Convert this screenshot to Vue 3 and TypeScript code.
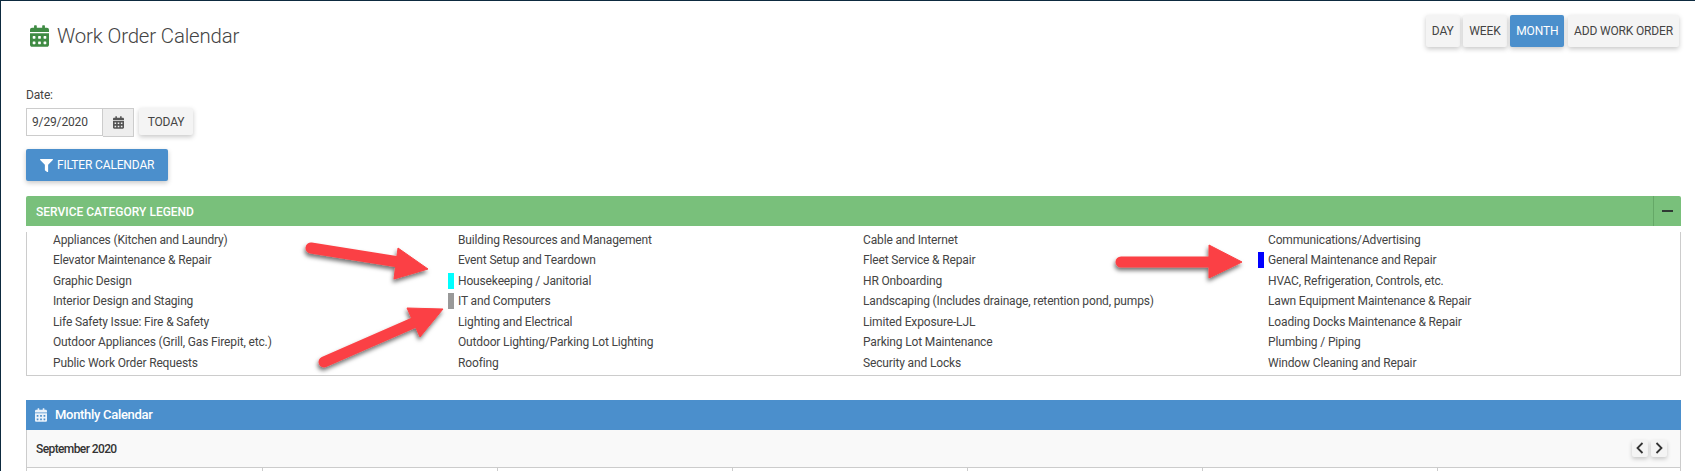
<script setup lang="ts">
interface Category { name: string; color?: string }

const calendarPath =
  'M0 464c0 26.5 21.5 48 48 48h352c26.5 0 48-21.5 48-48V192H0v272zm320-196c0-6.6 5.4-12 12-12h40c6.6 0 12 5.4 12 12v40c0 6.6-5.4 12-12 12h-40c-6.6 0-12-5.4-12-12v-40zm0 128c0-6.6 5.4-12 12-12h40c6.6 0 12 5.4 12 12v40c0 6.6-5.4 12-12 12h-40c-6.6 0-12-5.4-12-12v-40zM192 268c0-6.6 5.4-12 12-12h40c6.6 0 12 5.4 12 12v40c0 6.6-5.4 12-12 12h-40c-6.6 0-12-5.4-12-12v-40zm0 128c0-6.6 5.4-12 12-12h40c6.6 0 12 5.4 12 12v40c0 6.6-5.4 12-12 12h-40c-6.6 0-12-5.4-12-12v-40zM64 268c0-6.6 5.4-12 12-12h40c6.6 0 12 5.4 12 12v40c0 6.6-5.4 12-12 12H76c-6.6 0-12-5.4-12-12v-40zm0 128c0-6.6 5.4-12 12-12h40c6.6 0 12 5.4 12 12v40c0 6.6-5.4 12-12 12H76c-6.6 0-12-5.4-12-12v-40zM400 64h-48V16c0-8.8-7.2-16-16-16h-32c-8.8 0-16 7.2-16 16v48H160V16c0-8.8-7.2-16-16-16h-32c-8.8 0-16 7.2-16 16v48H48C21.5 64 0 85.5 0 112v48h448v-48c0-26.5-21.5-48-48-48z'

const categories: Category[] = [
  { name: 'Appliances (Kitchen and Laundry)' },
  { name: 'Building Resources and Management' },
  { name: 'Cable and Internet' },
  { name: 'Communications/Advertising' },
  { name: 'Elevator Maintenance & Repair' },
  { name: 'Event Setup and Teardown' },
  { name: 'Fleet Service & Repair' },
  { name: 'General Maintenance and Repair', color: '#0000ff' },
  { name: 'Graphic Design' },
  { name: 'Housekeeping / Janitorial', color: '#00ffff' },
  { name: 'HR Onboarding' },
  { name: 'HVAC, Refrigeration, Controls, etc.' },
  { name: 'Interior Design and Staging' },
  { name: 'IT and Computers', color: '#999999' },
  { name: 'Landscaping (Includes drainage, retention pond, pumps)' },
  { name: 'Lawn Equipment Maintenance & Repair' },
  { name: 'Life Safety Issue: Fire & Safety' },
  { name: 'Lighting and Electrical' },
  { name: 'Limited Exposure-LJL' },
  { name: 'Loading Docks Maintenance & Repair' },
  { name: 'Outdoor Appliances (Grill, Gas Firepit, etc.)' },
  { name: 'Outdoor Lighting/Parking Lot Lighting' },
  { name: 'Parking Lot Maintenance' },
  { name: 'Plumbing / Piping' },
  { name: 'Public Work Order Requests' },
  { name: 'Roofing' },
  { name: 'Security and Locks' },
  { name: 'Window Cleaning and Repair' },
]

const views = ['Day', 'Week', 'Month', 'Add Work Order']
const weekdays = 7
</script>

<template>
  <div class="page">
    <header class="top">
      <h1 class="title">
        <svg class="title-icon" viewBox="0 0 448 512"><path :d="calendarPath" /></svg>
        <span>Work Order Calendar</span>
      </h1>
      <div class="views">
        <button v-for="v in views" :key="v" class="btn" :class="{ active: v === 'Month' }">{{ v }}</button>
      </div>
    </header>

    <label class="date-label">Date:</label>
    <div class="date-row">
      <div class="date-input">9/29/2020</div>
      <div class="date-addon">
        <svg viewBox="0 0 448 512"><path :d="calendarPath" /></svg>
      </div>
      <button class="btn today">Today</button>
    </div>

    <button class="btn primary filter">
      <svg viewBox="0 0 512 512"><path d="M487.976 0H24.028C2.71 0-8.047 25.866 7.058 40.971L192 225.941V432c0 7.831 3.821 15.17 10.237 19.662l80 55.98C298.02 518.69 320 507.493 320 487.98V225.941l184.947-184.97C520.021 25.896 509.338 0 487.976 0z" /></svg>
      Filter Calendar
    </button>

    <section class="legend-head">
      <span>SERVICE CATEGORY LEGEND</span>
      <div class="collapse"><i></i></div>
    </section>
    <ul class="legend">
      <li v-for="c in categories" :key="c.name">
        <i class="swatch" :style="{ background: c.color ?? 'transparent' }"></i>
        <span>{{ c.name }}</span>
      </li>
    </ul>

    <section class="cal-head">
      <svg viewBox="0 0 448 512"><path :d="calendarPath" /></svg>
      <span>Monthly Calendar</span>
    </section>
    <div class="cal-toolbar">
      <strong>September 2020</strong>
      <div class="nav">
        <button class="nav-btn">
          <svg viewBox="0 0 10 14"><path d="M7.5 2 2.5 7l5 5" /></svg>
        </button>
        <button class="nav-btn">
          <svg viewBox="0 0 10 14"><path d="M2.5 2l5 5-5 5" /></svg>
        </button>
      </div>
    </div>
    <div class="cal-grid">
      <div v-for="n in weekdays" :key="n" class="cal-cell"></div>
    </div>

    <svg class="arrows" viewBox="0 0 1695 471" width="1695" height="471">
      <defs>
        <filter id="arrow-shadow" x="-20%" y="-40%" width="140%" height="180%">
          <feDropShadow dx="-1" dy="3" stdDeviation="2" flood-color="#000" flood-opacity="0.55" />
        </filter>
      </defs>
      <g class="arrow" filter="url(#arrow-shadow)">
        <path class="shaft" d="M311 248 405 263" />
        <polygon points="398,248 428,269 394,279" />
      </g>
      <g class="arrow" filter="url(#arrow-shadow)">
        <path class="shaft" d="M324 362 420 320" />
        <polygon points="407,308 443,309 420,337" />
      </g>
      <g class="arrow" filter="url(#arrow-shadow)">
        <path class="shaft" d="M1121 262 1215 262" />
        <polygon points="1209,245 1242,262 1209,278" />
      </g>
    </svg>
  </div>
</template>

<style scoped>
.page {
  position: relative;
  box-sizing: border-box;
  width: 1695px;
  height: 471px;
  overflow: hidden;
  padding: 14px 14px 0 25px;
  background: #fff;
  border-top: 1px solid #0d2a3f;
  border-left: 1px solid #0d2a3f;
  font-family: Roboto, "Liberation Sans", sans-serif;
  font-size: 12px;
  letter-spacing: -0.15px;
  color: #444;
}
.top {
  display: flex;
  justify-content: space-between;
  height: 32px;
  margin-bottom: 41px;
}
.title {
  display: flex;
  align-items: center;
  gap: 8px;
  margin: 0 0 0 4px;
  font-size: 20.4px;
  font-weight: 300;
  color: #444;
  height: 41px;
}
.title span {
  padding-top: 1px;
}
.title-icon {
  width: 19px;
  height: 22px;
  fill: #3f8b43;
}
.views {
  display: flex;
  gap: 3.7px;
  margin-right: 2px;
}
.btn {
  border: 0;
  border-radius: 2px;
  background: #f4f4f4;
  color: #444;
  font: 400 12px Roboto, "Liberation Sans", sans-serif;
  letter-spacing: -0.15px;
  text-transform: uppercase;
  padding: 0 6px;
  height: 32px;
  box-shadow: 0 2px 5px rgba(0, 0, 0, 0.22);
}
.btn.active,
.btn.primary {
  background: #4b8fcc;
  color: #fff;
}
.date-label {
  display: block;
  height: 14px;
  line-height: 14px;
  margin-bottom: 6px;
}
.date-row {
  display: flex;
  align-items: flex-start;
  height: 28px;
}
.date-input {
  box-sizing: border-box;
  width: 77px;
  height: 28px;
  line-height: 26px;
  padding-left: 5px;
  border: 1px solid #ccc;
  font-size: 12px;
}
.date-addon {
  box-sizing: border-box;
  width: 31px;
  height: 29px;
  border: 1px solid #ccc;
  border-left: 0;
  background: #eee;
  display: flex;
  align-items: center;
  justify-content: center;
}
.date-addon svg {
  width: 11px;
  height: 13px;
  fill: #555;
}
.today {
  margin-left: 5px;
  height: 27px;
  width: 54px;
  padding: 0;
}
.filter {
  display: flex;
  align-items: center;
  gap: 4px;
  width: 142px;
  margin-top: 13px;
  padding: 0 0 0 14px;
  border-radius: 2px;
}
.filter svg {
  width: 13px;
  height: 13px;
  fill: #fff;
}
.legend-head {
  display: flex;
  align-items: center;
  justify-content: space-between;
  box-sizing: border-box;
  height: 30px;
  margin-top: 15px;
  padding: 0 0 0 10px;
  background: #79c07b;
  color: #fff;
  font-weight: 500;
  letter-spacing: 0;
  border-radius: 2px 2px 0 0;
}
.legend-head span {
  padding-top: 1px;
}
.collapse {
  width: 27px;
  height: 100%;
  border-left: 1px solid #65a867;
  display: flex;
  align-items: center;
  justify-content: center;
}
.collapse i {
  width: 11px;
  height: 2px;
  background: #2f3a33;
}
.legend {
  display: grid;
  grid-template-columns: repeat(4, 405px);
  grid-auto-rows: 16px;
  row-gap: 4.5px;
  margin: 5.9px 0 0;
  padding: 0 0 4.1px 16px;
  border: 1px solid #ccc;
  border-top: 0;
  list-style: none;
}
.legend li {
  display: flex;
  align-items: center;
  gap: 4px;
  line-height: 16px;
  white-space: nowrap;
}
.swatch {
  flex: none;
  width: 6px;
  height: 16px;
}
.cal-head {
  display: flex;
  align-items: center;
  gap: 8px;
  height: 30px;
  margin-top: 24px;
  padding-left: 9px;
  background: #4b8fcc;
  color: #fff;
  font-size: 13px;
  font-weight: 500;
  letter-spacing: -0.3px;
}
.cal-head svg {
  width: 12px;
  height: 14px;
  fill: #eaf2fa;
}
.cal-toolbar {
  display: flex;
  align-items: center;
  justify-content: space-between;
  height: 38px;
  box-sizing: border-box;
  padding: 0 13px 0 9px;
  background: #f9f9f9;
  border: 1px solid #ccc;
  border-width: 0 1px 1px;
}
.cal-toolbar strong {
  padding-top: 1px;
  font-weight: 500;
  font-size: 12px;
  letter-spacing: -0.6px;
  color: #333;
}
.nav {
  display: flex;
  gap: 3px;
}
.nav-btn {
  width: 16px;
  height: 17px;
  padding: 0;
  border: 0;
  border-radius: 2px;
  background: #f4f4f4;
  box-shadow: 0 2px 4px rgba(0, 0, 0, 0.2);
  display: flex;
  align-items: center;
  justify-content: center;
}
.nav-btn svg {
  width: 10px;
  height: 14px;
  fill: none;
  stroke: #333;
  stroke-width: 1.8;
}
.cal-grid {
  display: grid;
  grid-template-columns: repeat(7, 235px);
  height: 40px;
  border-left: 1px solid #ccc;
  border-right: 1px solid #ccc;
}
.cal-cell + .cal-cell {
  border-left: 1px solid #ccc;
}
.arrows {
  position: absolute;
  top: -1px;
  left: -1px;
  pointer-events: none;
}
.arrow polygon {
  fill: #fb4144;
  stroke: #fb4144;
  stroke-width: 1;
  stroke-linejoin: round;
}
.arrow .shaft {
  fill: none;
  stroke: #fb4144;
  stroke-width: 11;
  stroke-linecap: round;
}
</style>

<style>
html, body { margin: 0; background: #fff; }
</style>
